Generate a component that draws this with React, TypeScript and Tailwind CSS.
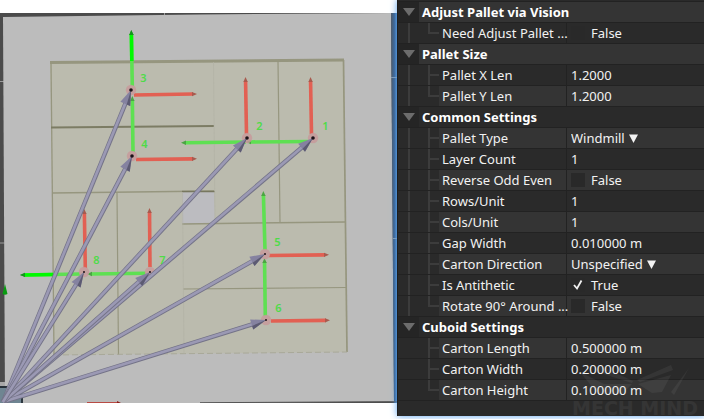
import React, { useState } from 'react';

type Field = {
  id: string;
  label: string;
  kind: 'number' | 'check' | 'select';
  value: string;
};

type Section = {
  title: string;
  fields: Field[];
};

const sections: Section[] = [
  {
    title: 'Adjust Pallet via Vision',
    fields: [{ id: 'need-adjust', label: 'Need Adjust Pallet ...', kind: 'check', value: 'False' }],
  },
  {
    title: 'Pallet Size',
    fields: [
      { id: 'pallet-x', label: 'Pallet X Len', kind: 'number', value: '1.2000' },
      { id: 'pallet-y', label: 'Pallet Y Len', kind: 'number', value: '1.2000' },
    ],
  },
  {
    title: 'Common Settings',
    fields: [
      { id: 'pallet-type', label: 'Pallet Type', kind: 'select', value: 'Windmill' },
      { id: 'layer-count', label: 'Layer Count', kind: 'number', value: '1' },
      { id: 'reverse-odd', label: 'Reverse Odd Even', kind: 'check', value: 'False' },
      { id: 'rows-unit', label: 'Rows/Unit', kind: 'number', value: '1' },
      { id: 'cols-unit', label: 'Cols/Unit', kind: 'number', value: '1' },
      { id: 'gap-width', label: 'Gap Width', kind: 'number', value: '0.010000 m' },
      { id: 'carton-direction', label: 'Carton Direction', kind: 'select', value: 'Unspecified' },
      { id: 'antithetic', label: 'Is Antithetic', kind: 'check', value: 'True' },
      { id: 'rotate', label: 'Rotate 90° Around ...', kind: 'check', value: 'False' },
    ],
  },
  {
    title: 'Cuboid Settings',
    fields: [
      { id: 'carton-length', label: 'Carton Length', kind: 'number', value: '0.500000 m' },
      { id: 'carton-width', label: 'Carton Width', kind: 'number', value: '0.200000 m' },
      { id: 'carton-height', label: 'Carton Height', kind: 'number', value: '0.100000 m' },
    ],
  },
];

const LIGHT = 'bg-[#343434]';
const DARK = 'bg-[#2a2a2a]';

const FieldValue: React.FC<{ field: Field }> = ({ field }) => {
  const [checked, setChecked] = useState(field.value === 'True');

  if (field.kind === 'check') {
    return (
      <div className="flex items-center gap-1.5">
        <span className="grid h-3.5 w-3.5">
          <input
            id={field.id}
            type="checkbox"
            checked={checked}
            onChange={(e) => setChecked(e.target.checked)}
            className="peer col-start-1 row-start-1 h-3.5 w-3.5 appearance-none bg-[#292929]"
          />
          <svg
            viewBox="0 0 14 14"
            className="pointer-events-none invisible col-start-1 row-start-1 peer-checked:visible"
          >
            <path d="M3 7 L6 10.5 L10.5 2.5" fill="none" stroke="#f0f0f0" strokeWidth="1.8" />
          </svg>
        </span>
        <span>{checked ? 'True' : 'False'}</span>
      </div>
    );
  }

  if (field.kind === 'select') {
    return (
      <div className="flex items-center gap-1">
        <select id={field.id} defaultValue={field.value} className="field-sizing-content appearance-none bg-transparent">
          <option>{field.value}</option>
        </select>
        <svg viewBox="0 0 9 9" className="pointer-events-none h-[9px] w-[9px]">
          <path d="M0 0.5 H9 L4.5 9 Z" fill="#f2f2f2" />
        </svg>
      </div>
    );
  }

  return <input id={field.id} type="text" defaultValue={field.value} className="w-full min-w-0 bg-transparent" />;
};

const PropertyPanel: React.FC = () => {
  const [closed, setClosed] = useState<string[]>([]);
  let row = 0;

  const toggle = (title: string) =>
    setClosed(closed.includes(title) ? closed.filter((t) => t !== title) : [...closed, title]);

  return (
    <section className="relative z-10 mb-[3px] border-l border-[#1c1c1c] bg-[#2a2a2a] pt-px text-[13px] leading-5 text-[#f2f2f2] shadow-[0_0_7px_#5aa4f2]">
      <div className="border-t border-[#222222]">
        {sections.map((section, s) => {
          const headerTone = row++ % 2 === 0 && s < 2 ? LIGHT : DARK;
          const last = s === sections.length - 1;
          return (
            <div key={section.title}>
              <button
                type="button"
                aria-expanded={!closed.includes(section.title)}
                onClick={() => toggle(section.title)}
                className="flex h-[21px] w-full items-stretch border-b border-[#222222] bg-[#252525] text-left font-bold text-white"
              >
                <span className="flex w-[21px] shrink-0 items-center justify-center">
                  <svg viewBox="0 0 12 8" className="h-2 w-3">
                    <path d="M0 0 H12 L6 8 Z" fill="#6c6c6c" />
                  </svg>
                </span>
                <span className={`flex-1 pl-[3px] ${headerTone}`}>{section.title}</span>
              </button>
              {!closed.includes(section.title) &&
                section.fields.map((field, i) => {
                  const tone = row++ % 2 === 0 ? LIGHT : DARK;
                  const end = i === section.fields.length - 1;
                  return (
                    <div key={field.id} className="flex h-[21px] border-b border-[#222222]">
                      <span className="flex w-[41px] shrink-0 pl-2.5">
                        <span className={`w-0.5 ${last ? '' : 'bg-[#3c3c3c]'}`} />
                        <span className="ml-[18px] flex-1">
                          <span className="block h-[11px] border-b-2 border-l-2 border-[#3c3c3c]" />
                          <span className={`block h-[9px] ${end ? '' : 'border-l-2 border-[#3c3c3c]'}`} />
                        </span>
                      </span>
                      <span className={`relative w-32 shrink-0 whitespace-nowrap border-r border-[#222222] pl-[3px] ${tone}`}>
                        <label htmlFor={field.id}>{field.label}</label>
                      </span>
                      <span className={`min-w-0 flex-1 pl-1 ${tone}`}>
                        <FieldValue field={field} />
                      </span>
                    </div>
                  );
                })}
            </div>
          );
        })}
      </div>
      <Watermark />
    </section>
  );
};

const Watermark: React.FC = () => (
  <div className="pointer-events-none absolute right-0.5 bottom-0 flex flex-col items-center text-white opacity-5">
    <svg viewBox="0 0 134 36" className="h-9 w-[134px]" fill="currentColor">
      <path d="M12 8 L36 20 L64 20 L54 30 L30 30 Z" />
      <path d="M31 1 L65 17 L64 19 L29 8 Z M103 1 L69 16 L72 18 L105 6 Z" />
      <path d="M121 4 L106 31 L103 28 Z" />
      <path d="M70 20 L103 11 L94 28 L84 29 Z" />
    </svg>
    <span className="font-['DejaVu_Sans',sans-serif] text-[19px] leading-4 font-bold">MECH MIND</span>
  </div>
);

type Pose = {
  n: number;
  x: number;
  y: number;
  red: [number, number, number, number];
  green: [number, number, number, number];
};

const poses: Pose[] = [
  { n: 1, x: 313, y: 138, red: [311.5, 134, 310.5, 77], green: [310, 141.5, 246, 142] },
  { n: 2, x: 247, y: 138, red: [246.5, 134, 245.5, 77], green: [246, 142, 181, 142.8] },
  { n: 3, x: 131, y: 90, red: [134, 95, 197, 94], green: [132.3, 86, 131.3, 30] },
  { n: 4, x: 132, y: 156, red: [136, 159.5, 197, 158.8], green: [133, 152, 132.3, 96] },
  { n: 5, x: 265, y: 254, red: [269, 255.5, 329, 254.8], green: [265, 250, 263.3, 191] },
  { n: 6, x: 266, y: 320, red: [271, 321, 330, 320.3], green: [265.3, 316, 264.5, 258] },
  { n: 7, x: 150, y: 272, red: [150, 267, 149.5, 208], green: [146, 273.3, 87, 274] },
  { n: 8, x: 84, y: 272, red: [85.3, 268, 84.3, 209], green: [80, 274, 20, 275] },
];

const Axis: React.FC<{ line: number[]; color: string; tip: string }> = ({ line, color, tip }) => {
  const [x1, y1, x2, y2] = line;
  const length = Math.hypot(x2 - x1, y2 - y1);
  const angle = (Math.atan2(y2 - y1, x2 - x1) * 180) / Math.PI;
  return (
    <g transform={`translate(${x1} ${y1}) rotate(${angle})`}>
      <rect y={-1.8} width={length - 4} height={3.6} fill={color} />
      <path d={`M${length - 5} -2.2 L${length} 0 L${length - 5} 2.2 Z`} fill={tip} />
    </g>
  );
};

const Arrow: React.FC<{ x: number; y: number }> = ({ x, y }) => {
  const length = Math.hypot(x - 3, y - 402);
  const angle = (Math.atan2(y - 402, x - 3) * 180) / Math.PI;
  return (
    <g transform={`translate(3 402) rotate(${angle})`}>
      <rect y={-2.2} width={length - 12} height={4.4} fill="#747388" />
      <rect y={-1.5} width={length - 12} height={2.7} fill="#9b99b4" />
      <path d={`M${length - 15} -5.3 L${length} 0 L${length - 15} 5.3 Z`} fill="#8582a0" />
      <path d={`M${length - 15} 1.5 L${length} 0 L${length - 15} 5.3 Z`} fill="#5c5a72" />
    </g>
  );
};

const PalletScene: React.FC = () => (
  <svg viewBox="0 13 397 390" className="mt-[13px] block w-full" role="img" aria-label="Pallet pattern">
    <defs>
      <linearGradient id="edge">
        <stop offset="0" stopColor="#505a66" />
        <stop offset="0.6" stopColor="#365a86" />
        <stop offset="1" stopColor="#4d7fb8" />
      </linearGradient>
    </defs>
    <rect y="13" width="397" height="390" fill="#4b4b4b" />
    <path d="M164.500 13 V17 M0 81.500 H4 M0 243 H5" stroke="#9a9a9a" />
    <path d="M3 17 L200 14.500 L391 13 L394 401.500 L200 403 H5 Z" fill="#bcbcbc" />
    <path d="M391 13 H397 V403 H394 Z" fill="url(#edge)" />
    <path d="M391 77.500 H397 M393 238.500 H397" stroke="#8499ae" />
    <path d="M0 382 H5 V387 H0 Z" fill="#a8a8a8" />

    <path d="M50 62 L344 59 L347.500 352 L54 355 Z" fill="#bbbbae" />
    <path d="M182 192 L214 191 L215 223 L182 224 Z" fill="#bcbcc0" />
    <g fill="none" stroke="#96967f">
      <path d="M50 62.500 L344 60" strokeWidth="3" />
      <path d="M51 62 L54 355" strokeWidth="1.300" />
      <path d="M343.500 60 L347 352" strokeWidth="1.700" />
      <path d="M278 61 L280 222 M117 193 L118.500 355" strokeWidth="1.200" />
      <path d="M182 224 L345 222" strokeWidth="1.500" />
      <path d="M183 289 L346 287.500" strokeWidth="1.200" />
      <path d="M52 193 L214 191" strokeWidth="1.300" />
      <path d="M51 127.500 L214 126" stroke="#7c7c64" strokeWidth="2" />
      <path d="M182 191.500 H215" stroke="#77775f" strokeWidth="1.500" />
      <path d="M54 355 L347 352" strokeDasharray="6 3" stroke="#a9a999" />
      <path d="M182.500 192 L184 354 M213.500 62 L215 223" stroke="#b2b2a5" strokeWidth="0.700" />
    </g>

    {poses.map((p) => (
      <g key={p.n}>
        <Axis line={p.green} color="#5ee052" tip="#4aa542" />
        <Axis line={p.red} color="#e26053" tip="#a85a4e" />
      </g>
    ))}
    {/* parts of the axes that stick out of the cartons */}
    <Axis line={[131.8, 61, 131.3, 30]} color="#00fa00" tip="#12951c" />
    <Axis line={[53, 274.5, 20, 275]} color="#00fa00" tip="#12951c" />

    {poses.map((p) => (
      <circle key={p.n} cx={p.x} cy={p.y} r="5.200" fill="#c79a9b" opacity="0.850" />
    ))}
    <path d="M0 387 H18 L23 394 V403 H0 Z" fill="#6f8592" />
    <path d="M0 387 H12 M18 393 L22 397 V403" fill="none" stroke="#263038" strokeWidth="1.800" />
    <path d="M87 402.500 H118" stroke="#b84b44" />
    <path d="M117 401 L121 403 H117 Z" fill="#8c1c18" />
    <path d="M5 284 L7.500 294 Q5 295.500 2.500 294 Z" fill="#089c10" />
    <path d="M200 402.700 L397 401.700" stroke="#565656" />
    {poses.map((p) => (
      <Arrow key={p.n} x={p.x} y={p.y} />
    ))}
    {poses.map((p) => (
      <circle key={p.n} cx={p.x} cy={p.y} r={p.n < 5 ? 1.8 : 1} fill="#1c1218" />
    ))}
    <g className="font-['Noto_Sans',sans-serif] text-[11px] font-semibold" fill="#4edb48" textAnchor="middle">
      {poses.map((p) => (
        <text key={p.n} x={p.x + 12.5} y={p.y - 8}>
          {p.n}
        </text>
      ))}
    </g>
  </svg>
);

const App: React.FC = () => {
  return (
    <main className="grid grid-cols-[397fr_307fr] overflow-hidden bg-white font-['Noto_Sans',sans-serif]">
      <div className="min-w-0">
        <PalletScene />
        <div className="h-4" />
      </div>
      <PropertyPanel />
    </main>
  );
};

export default App;
